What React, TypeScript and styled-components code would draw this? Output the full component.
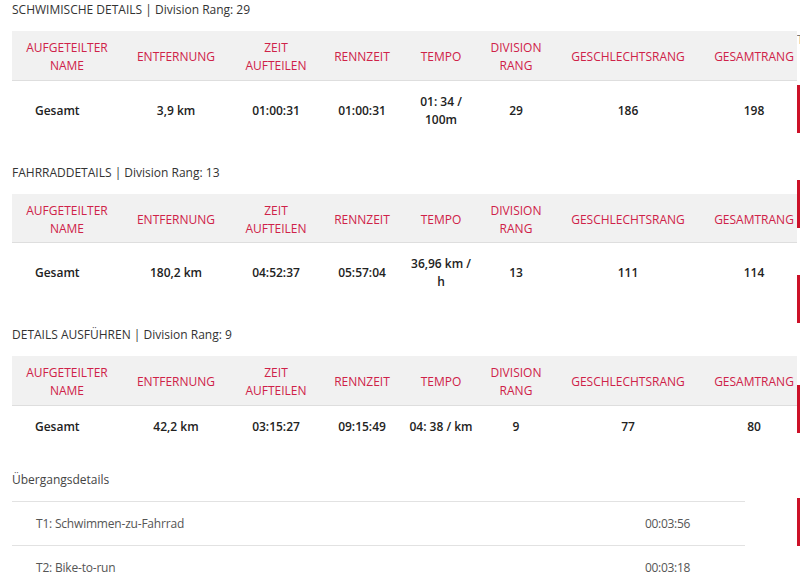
import React from "react";
import styled, { createGlobalStyle } from "styled-components";

type Split = {
  title: string;
  rank: string;
  row: string[];
};

const splits: Split[] = [
  {
    title: "SCHWIMISCHE DETAILS",
    rank: "29",
    row: ["Gesamt", "3,9 km", "01:00:31", "01:00:31", "01: 34 /\n100m", "29", "186", "198"],
  },
  {
    title: "FAHRRADDETAILS",
    rank: "13",
    row: ["Gesamt", "180,2 km", "04:52:37", "05:57:04", "36,96 km /\nh", "13", "111", "114"],
  },
  {
    title: "DETAILS AUSFÜHREN",
    rank: "9",
    row: ["Gesamt", "42,2 km", "03:15:27", "09:15:49", "04: 38 / km", "9", "77", "80"],
  },
];

const headers = [
  "AUFGETEILTER\nNAME",
  "ENTFERNUNG",
  "ZEIT\nAUFTEILEN",
  "RENNZEIT",
  "TEMPO",
  "DIVISION\nRANG",
  "GESCHLECHTSRANG",
  "GESAMTRANG",
];

const widths = [110, 108, 92, 80, 78, 72, 152, 100];

const transitions = [
  { name: "T1: Schwimmen-zu-Fahrrad", time: "00:03:56" },
  { name: "T2: Bike-to-run", time: "00:03:18" },
];

// vertical gap above each red bar of the cut-off column on the right
const bars = [36, 47, 47, 62, 65];

const App = () => {
  return (
    <>
      <GlobalStyle />
      <Page>
        <Main>
          {splits.map((s) => (
            <Section key={s.title}>
              <Title>
                {s.title} | Division Rang: {s.rank}
              </Title>
              <TableWrap>
                <Table>
                  <colgroup>
                    {widths.map((w, i) => (
                      <col key={i} style={{ width: w }} />
                    ))}
                  </colgroup>
                  <thead>
                    <tr>
                      {headers.map((h) => (
                        <Th key={h}>{h}</Th>
                      ))}
                    </tr>
                  </thead>
                  <tbody>
                    <tr>
                      {s.row.map((v, i) => (
                        <Td key={i} $first={i === 0}>
                          {v}
                        </Td>
                      ))}
                    </tr>
                  </tbody>
                </Table>
              </TableWrap>
            </Section>
          ))}
          <SubTitle>Übergangsdetails</SubTitle>
          <TransitionList>
            {transitions.map((t) => (
              <TransitionRow key={t.name}>
                <TransitionName>{t.name}</TransitionName>
                <TransitionTime>{t.time}</TransitionTime>
              </TransitionRow>
            ))}
          </TransitionList>
        </Main>
        <Side>
          <SideLetter>T</SideLetter>
          {bars.map((m, i) => (
            <Bar key={i} $gap={m} />
          ))}
        </Side>
      </Page>
    </>
  );
};

export default App;

const GlobalStyle = createGlobalStyle`
  body {
    margin: 0;
    background: #fff;
    font-family: "Open Sans", "DejaVu Sans", sans-serif;
  }
`;

const Page = styled.div({
  display: "flex",
  width: "800px",
  height: "584px",
  overflow: "hidden",
});

const Main = styled.div({
  width: "785px",
  paddingLeft: "12px",
  paddingTop: "1px",
  flexShrink: 0,
});

const Side = styled.div({
  width: "3px",
  display: "flex",
  flexDirection: "column",
  overflow: "hidden",
});

const SideLetter = styled.div({
  marginTop: "31px",
  fontSize: "12px",
  lineHeight: "18px",
  color: "#777",
  height: "18px",
});

const Bar = styled.div<{ $gap: number }>`
  margin-top: ${(p) => p.$gap}px;
  height: 48px;
  width: 3px;
  background: #cc1128;
  flex-shrink: 0;
`;

const Section = styled.section({
  marginBottom: "25px",
});

const Title = styled.div({
  fontSize: "12px",
  lineHeight: "18px",
  color: "#333",
  marginBottom: "12px",
});

const TableWrap = styled.div({
  width: "785px",
  overflow: "hidden",
});

const Table = styled.table({
  tableLayout: "fixed",
  width: "792px",
  borderCollapse: "collapse",
});

const Th = styled.th({
  background: "#f1f1f1",
  color: "#cf2248",
  fontWeight: 400,
  fontSize: "12px",
  lineHeight: "18px",
  height: "49px",
  padding: "4px 2px 0",
  textAlign: "center",
  whiteSpace: "pre-line",
  borderBottom: "1px solid #dedede",
  boxSizing: "border-box",
});

const Td = styled.td<{ $first?: boolean }>`
  color: #222;
  font-weight: 600;
  font-size: 12px;
  line-height: 18px;
  padding: 12px 2px 10px ${(p) => (p.$first ? "23px" : "2px")};
  text-align: ${(p) => (p.$first ? "left" : "center")};
  white-space: pre-line;
`;

const SubTitle = styled.div({
  fontSize: "12px",
  lineHeight: "18px",
  color: "#444",
  marginTop: "3px",
  marginBottom: "12px",
});

const TransitionList = styled.div({
  width: "733px",
});

const TransitionRow = styled.div({
  display: "flex",
  alignItems: "center",
  height: "44px",
  borderTop: "1px solid #e2e2e2",
  paddingLeft: "24px",
  boxSizing: "border-box",
});

const TransitionName = styled.div({
  flex: 1,
  fontSize: "12px",
  color: "#555",
  letterSpacing: "-0.2px",
});

const TransitionTime = styled.div({
  width: "100px",
  fontSize: "12px",
  color: "#555",
  letterSpacing: "-0.3px",
});
